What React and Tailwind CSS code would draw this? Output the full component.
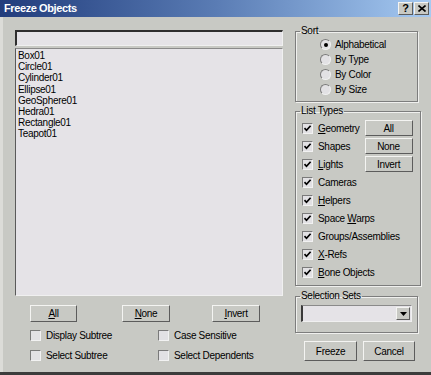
import React from 'react';

const objects = ['Box01', 'Circle01', 'Cylinder01', 'Ellipse01', 'GeoSphere01', 'Hedra01', 'Rectangle01', 'Teapot01'];

const raised = 'border border-t-[#f4f4f2] border-l-[#f4f4f2] border-r-[#5c5c5c] border-b-[#5c5c5c] bg-[#c8c9c4]';

const Btn = ({ children, className = '' }) => (
  <div className={`${raised} flex items-center justify-center text-black ${className}`}>{children}</div>
);

const Check = ({ checked }) => (
  <div className="w-[11px] h-[11px] shrink-0 border border-t-[#7a7a7a] border-l-[#7a7a7a] border-r-[#f2f2f2] border-b-[#f2f2f2] bg-[#e2e1e4] flex items-center justify-center">
    {checked && (
      <svg width="9" height="9" viewBox="0 0 9 9">
        <path d="M1.5 4.2 L3.5 6.3 L7.6 1.8" fill="none" stroke="#000" strokeWidth="1.7" />
      </svg>
    )}
  </div>
);

const Radio = ({ on }) => (
  <div className="w-[11px] h-[11px] shrink-0 rounded-full border border-t-[#7a7a7a] border-l-[#7a7a7a] border-r-[#f0f0f0] border-b-[#f0f0f0] bg-[#e2e1e4] flex items-center justify-center">
    {on && <div className="w-[4px] h-[4px] rounded-full bg-black" />}
  </div>
);

const U = ({ children }) => <span className="underline underline-offset-[1px]">{children}</span>;

// etched group box; padding goes on the inner div so the legend stays at the left
const Group = ({ label, className = '', inner = '', children }) => (
  <fieldset className={`border border-[#7d7d7d] shadow-[1px_1px_0_#f0f0ee,inset_1px_1px_0_#f0f0ee] ${className}`}>
    <legend className="ml-[4px] px-[1px] leading-[12px] h-[12px]">{label}</legend>
    <div className={inner}>{children}</div>
  </fieldset>
);

const typeRows = [
  [<><U>G</U>eometry</>, 'All'],
  ['Shapes', 'None'],
  [<><U>L</U>ights</>, 'Invert'],
  ['Cameras'],
  [<><U>H</U>elpers</>],
  [<>Space <U>W</U>arps</>],
  ['Groups/Assemblies'],
  [<><U>X</U>-Refs</>],
  [<><U>B</U>one Objects</>],
];

export default function App() {
  return (
    <div className="w-[431px] h-[375px] bg-[#c8c9c4] font-['Liberation_Sans',Arial,sans-serif] text-[10px] tracking-[-0.3px] text-black flex flex-col overflow-hidden">
      {/* Title bar */}
      <div className="h-[17px] shrink-0 bg-gradient-to-r from-[#223c7c] via-[#5a7cb4] to-[#a6caf2] flex items-center pl-[4px] pr-[2px]">
        <span className="text-white font-bold text-[11px] tracking-[-0.4px]">Freeze Objects</span>
        <div className="ml-auto flex">
          <Btn className="w-[15px] h-[13px] font-bold text-[11px]">?</Btn>
          <Btn className="w-[15px] h-[13px] ml-[1px]">
            <svg width="8" height="7" viewBox="0 0 8 7"><path d="M0.5 0.5 L7.5 6.5 M7.5 0.5 L0.5 6.5" stroke="#000" strokeWidth="1.6" /></svg>
          </Btn>
        </div>
      </div>

      {/* Body */}
      <div className="flex flex-1 border-l-[3px] border-l-[#dcdcd8]">
        {/* Left column */}
        <div className="w-[268px] ml-[12px] flex flex-col">
          <div className="mt-[13px] h-[16px] bg-[#e5e3e7] border-t-2 border-l-2 border-t-[#2e2e2e] border-l-[#2e2e2e] border-b border-r border-b-[#f0f0f0] border-r-[#f0f0f0]" />
          <div className="mt-[2px] h-[248px] bg-[#e5e3e7] border border-t-[#8a8a8a] border-l-[#5a5a5a] border-r-[#f0f0f0] border-b-[#f0f0f0] pl-[2px] pt-[1px] leading-[11.2px]">
            {objects.map((o) => (
              <div key={o}>{o}</div>
            ))}
          </div>
          <div className="mt-[9px] flex">
            <Btn className="ml-[15px] w-[47px] h-[17px]"><U>A</U>ll</Btn>
            <Btn className="ml-[45px] w-[48px] h-[17px]"><U>N</U>one</Btn>
            <Btn className="ml-[42px] w-[48px] h-[17px]"><U>I</U>nvert</Btn>
          </div>
          <div className="mt-[8px] ml-[15px] grid grid-cols-[128px_1fr] gap-y-[9px] leading-[11px]">
            <div className="flex items-center gap-[5px]"><Check /><span>Display Subtree</span></div>
            <div className="flex items-center gap-[5px]"><Check /><span>Case Sensitive</span></div>
            <div className="flex items-center gap-[5px]"><Check /><span>Select Subtree</span></div>
            <div className="flex items-center gap-[5px]"><Check /><span>Select Dependents</span></div>
          </div>
        </div>

        {/* Right column */}
        <div className="w-[123px] ml-[12px] flex flex-col">
          <Group label="Sort" className="mt-[8px]" inner="pl-[24px] pb-[4px]">
            {['Alphabetical', 'By Type', 'By Color', 'By Size'].map((s, i) => (
              <div key={s} className="h-[15px] flex items-center gap-[4px]">
                <Radio on={i === 0} />
                <span>{s}</span>
              </div>
            ))}
          </Group>

          <Group label="List Types" className="mt-[3px]" inner="pl-[6px] pr-[7px] pt-[2px] pb-[4px]">
            {typeRows.map(([label, btn], i) => (
              <div key={i} className="h-[18px] flex items-center gap-[5px]">
                <Check checked />
                <span>{label}</span>
                {btn && (
                  <Btn className="ml-auto w-[48px] h-[16px]">{btn}</Btn>
                )}
              </div>
            ))}
          </Group>

          <Group label="Selection Sets" className="mt-[4px]" inner="px-[5px] pt-[3px] pb-[10px]">
            <div className="h-[17px] bg-[#e5e3e7] border border-t-[#8a8a8a] border-l-[#3a3a3a] border-l-2 border-r-[#f0f0f0] border-b-[#f0f0f0] flex justify-end items-center pr-[1px]">
              <Btn className="w-[14px] h-[13px]">
                <svg width="7" height="4" viewBox="0 0 7 4"><path d="M0 0 H7 L3.5 4 Z" fill="#000" /></svg>
              </Btn>
            </div>
          </Group>

          <div className="mt-[8px] flex pl-[9px]">
            <Btn className="w-[53px] h-[20px]">Freeze</Btn>
            <Btn className="ml-[6px] w-[52px] h-[20px]">Cancel</Btn>
          </div>
        </div>
      </div>
      <div className="h-[3px] shrink-0 bg-[#3c3c3c]" />
    </div>
  );
}
